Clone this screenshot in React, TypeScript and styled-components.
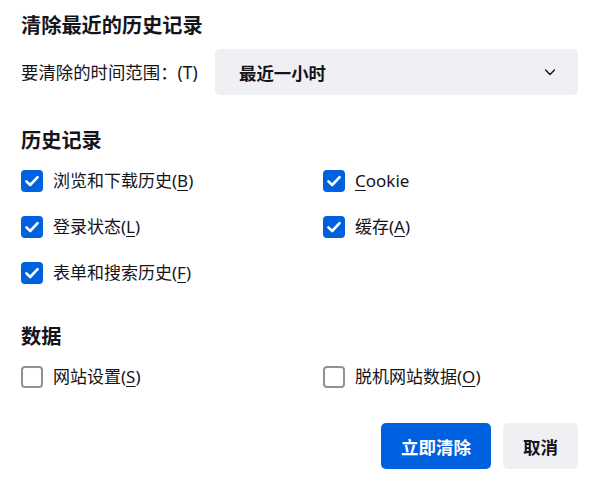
import React from "react";
import styled, { createGlobalStyle } from "styled-components";

const Global = createGlobalStyle`
  html, body { margin: 0; padding: 0; background: #ffffff; }
  body {
    font-family: "Noto Sans", "Noto Sans CJK SC", sans-serif;
    color: #15141a;
    -webkit-font-smoothing: antialiased;
  }
`;

const Dialog = styled.div`
  width: 600px;
  height: 485px;
  box-sizing: border-box;
  padding: 14px 22px 0 21px;
  display: flex;
  flex-direction: column;
  background: #fff;
`;

const Title = styled.h1`
  margin: 0;
  font-size: 20.2px;
  line-height: 22px;
  font-weight: 700;
`;

const RangeRow = styled.div`
  margin-top: 13px;
  display: grid;
  grid-template-columns: 194px 1fr;
  align-items: center;
  height: 46px;
`;

const RangeLabel = styled.label`
  font-size: 17.4px;
  line-height: 22px;
  white-space: nowrap;
`;

const Select = styled.div`
  height: 46px;
  box-sizing: border-box;
  border-radius: 5px;
  background: #f0f0f4;
  display: flex;
  align-items: center;
  justify-content: space-between;
  padding: 0 21px 0 24px;
  font-size: 17.4px;
  font-weight: 700;
`;

const SectionTitle = styled.h2<{ $top: number }>`
  margin: ${(p) => p.$top}px 0 0;
  font-size: 20.2px;
  line-height: 20px;
  font-weight: 700;
`;

const Grid = styled.div`
  margin-top: 8px;
  display: grid;
  grid-template-columns: 302px 1fr;
  grid-auto-rows: 46px;
`;

const Option = styled.label`
  display: flex;
  align-items: center;
  gap: 10px;
  font-size: 17px;
  line-height: 22px;
  white-space: nowrap;
`;

const Box = styled.span<{ $checked: boolean }>`
  width: 22px;
  height: 22px;
  box-sizing: border-box;
  border-radius: 4px;
  flex: none;
  display: flex;
  align-items: center;
  justify-content: center;
  background: ${(p) => (p.$checked ? "#0061e0" : "#ffffff")};
  border: ${(p) => (p.$checked ? "none" : "2px solid #8f8f9d")};
`;

const Key = styled.span`
  text-decoration: underline;
  text-underline-offset: 3px;
  text-decoration-thickness: 1px;
`;

const Footer = styled.div`
  margin-top: 23px;
  display: flex;
  justify-content: flex-end;
  gap: 12px;
`;

const Button = styled.button<{ $primary?: boolean }>`
  height: 46px;
  border: none;
  border-radius: 5px;
  padding: 0 20px;
  font-family: inherit;
  font-size: 17.5px;
  font-weight: 700;
  background: ${(p) => (p.$primary ? "#0061e0" : "#f0f0f4")};
  color: ${(p) => (p.$primary ? "#ffffff" : "#15141a")};
`;

const Check = ({ checked }: { checked: boolean }) => (
  <Box $checked={checked}>
    {checked && (
      <svg width="18" height="18" viewBox="0 0 18 18">
        <path
          d="M3.4 9.4 L7.2 13 L14.6 5.2"
          fill="none"
          stroke="#fff"
          strokeWidth="2.6"
          strokeLinecap="round"
          strokeLinejoin="round"
        />
      </svg>
    )}
  </Box>
);

type Item = { pre: string; key: string; post?: string; checked: boolean };

const OptionItem = ({ item }: { item: Item }) => (
  <Option>
    <Check checked={item.checked} />
    <span>
      {item.pre}
      <Key>{item.key}</Key>
      {item.post}
    </span>
  </Option>
);

const history: Item[] = [
  { pre: "浏览和下载历史(", key: "B", post: ")", checked: true },
  { pre: "", key: "C", post: "ookie", checked: true },
  { pre: "登录状态(", key: "L", post: ")", checked: true },
  { pre: "缓存(", key: "A", post: ")", checked: true },
  { pre: "表单和搜索历史(", key: "F", post: ")", checked: true },
];

const data: Item[] = [
  { pre: "网站设置(", key: "S", post: ")", checked: false },
  { pre: "脱机网站数据(", key: "O", post: ")", checked: false },
];

const Chevron = () => (
  <svg width="14" height="14" viewBox="0 0 14 14">
    <path
      d="M2.5 5 L7 9.5 L11.5 5"
      fill="none"
      stroke="#15141a"
      strokeWidth="1.4"
      strokeLinecap="round"
      strokeLinejoin="round"
    />
  </svg>
);

export default function App() {
  return (
    <>
      <Global />
      <Dialog>
        <Title>清除最近的历史记录</Title>
        <RangeRow>
          <RangeLabel>要清除的时间范围：(T)</RangeLabel>
          <Select>
            <span>最近一小时</span>
            <Chevron />
          </Select>
        </RangeRow>
        <SectionTitle $top={35}>历史记录</SectionTitle>
        <Grid>
          {history.map((it, i) => (
            <OptionItem key={i} item={it} />
          ))}
        </Grid>
        <SectionTitle $top={30}>数据</SectionTitle>
        <Grid>
          {data.map((it, i) => (
            <OptionItem key={i} item={it} />
          ))}
        </Grid>
        <Footer>
          <Button $primary>立即清除</Button>
          <Button>取消</Button>
        </Footer>
      </Dialog>
    </>
  );
}
